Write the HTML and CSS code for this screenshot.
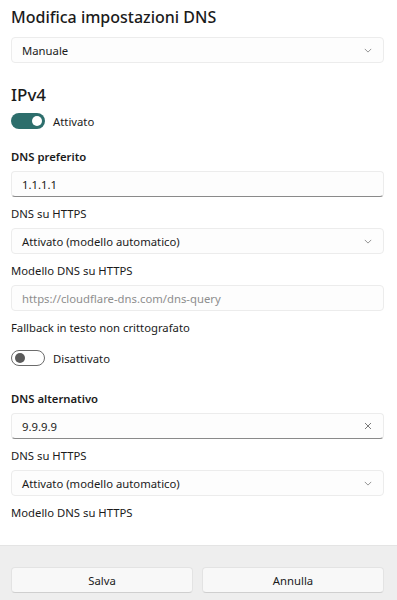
FILE: index.html
```html
<!DOCTYPE html>
<html lang="it">
<head>
  <meta charset="UTF-8" />
  <meta name="viewport" content="width=device-width, initial-scale=1.0"/>
  <title>Modifica impostazioni DNS</title>
  <link rel="stylesheet" href="styles.css">
</head>
<body>
  <div class="dialog">
    <div class="content">
      <h1>Modifica impostazioni DNS</h1>
      <div class="select">
        <span>Manuale</span>
        <svg class="chevron" viewBox="0 0 10 6"><path d="M1 1l4 4 4-4" /></svg>
      </div>

      <h2>IPv4</h2>
      <div class="toggle-row">
        <span class="toggle on"><span class="knob"></span></span>
        <span>Attivato</span>
      </div>

      <div class="label bold">DNS preferito</div>
      <div class="input"><span>1.1.1.1</span></div>

      <div class="label">DNS su HTTPS</div>
      <div class="select">
        <span>Attivato (modello automatico)</span>
        <svg class="chevron" viewBox="0 0 10 6"><path d="M1 1l4 4 4-4" /></svg>
      </div>

      <div class="label">Modello DNS su HTTPS</div>
      <div class="input plain"><span class="placeholder">https://cloudflare-dns.com/dns-query</span></div>

      <div class="label">Fallback in testo non crittografato</div>
      <div class="toggle-row loose">
        <span class="toggle off"><span class="knob"></span></span>
        <span>Disattivato</span>
      </div>

      <div class="label bold spaced">DNS alternativo</div>
      <div class="input">
        <span>9.9.9.9</span>
        <svg class="clear" viewBox="0 0 8 8"><path d="M1 1l6 6M7 1L1 7" /></svg>
      </div>

      <div class="label">DNS su HTTPS</div>
      <div class="select">
        <span>Attivato (modello automatico)</span>
        <svg class="chevron" viewBox="0 0 10 6"><path d="M1 1l4 4 4-4" /></svg>
      </div>

      <div class="label">Modello DNS su HTTPS</div>
    </div>

    <div class="footer">
      <button type="button">Salva</button>
      <button type="button">Annulla</button>
    </div>
  </div>
</body>
</html>
```

FILE: styles.css
```css
body {
  margin: 0;
  font-family: "Noto Sans", sans-serif;
  font-size: 11.3px;
  color: #1b1b1b;
  background: #fff;
}

.dialog {
  width: 397px;
  height: 600px;
  display: flex;
  flex-direction: column;
  overflow: hidden;
}

.content {
  flex: 1;
  padding: 5px 13px 0 11px;
  display: flex;
  flex-direction: column;
}

h1 {
  font-size: 16px;
  font-weight: 500;
  margin: 0 0 8px;
  line-height: 24px;
}

h2 {
  font-size: 17px;
  font-weight: 500;
  margin: 20px 0 4px;
  line-height: 24px;
}

.select,
.input {
  height: 26px;
  box-sizing: border-box;
  border: 1px solid #ececec;
  border-radius: 4px;
  background: #fdfdfd;
  display: flex;
  align-items: center;
  justify-content: space-between;
  padding: 0 11px 0 10px;
}

.input {
  border-bottom: 1px solid #8a8a8a;
}

.input.plain {
  border-bottom-color: #ececec;
}

.placeholder {
  color: #8e8e8e;
}

.chevron {
  width: 8px;
  height: 5px;
  fill: none;
  stroke: #7a7a7a;
  stroke-width: 1;
}

.clear {
  width: 8px;
  height: 8px;
  fill: none;
  stroke: #7a7a7a;
  stroke-width: 1;
}

.toggle-row {
  display: flex;
  align-items: center;
  gap: 8px;
  height: 20px;
}

.toggle-row.loose {
  margin-top: 6px;
}

.toggle {
  width: 34px;
  height: 16px;
  box-sizing: border-box;
  border-radius: 8px;
  display: flex;
  align-items: center;
  padding: 0 3px;
}

.toggle.on {
  background: #2d6e6c;
  justify-content: flex-end;
}

.toggle.off {
  border: 1px solid #6b6b6b;
}

.knob {
  width: 10px;
  height: 10px;
  border-radius: 50%;
}

.toggle.on .knob {
  background: #fff;
}

.toggle.off .knob {
  background: #5a5a5a;
}

.label {
  line-height: 16px;
  margin: 9px 0 6px;
}

.label.bold {
  font-weight: 600;
  margin-top: 18px;
}

.label.spaced {
  margin-top: 23px;
}

.footer {
  height: 55px;
  background: #eeeeee;
  border-top: 1px solid #e4e4e4;
  box-sizing: border-box;
  display: grid;
  grid-template-columns: 1fr 1fr;
  gap: 9px;
  padding: 21px 13px 0 11px;
}

.footer button {
  height: 26px;
  font-family: inherit;
  font-size: 11.3px;
  color: #1b1b1b;
  background: #f8f8f8;
  border: 1px solid #e3e3e3;
  border-bottom-color: #cfcfcf;
  border-radius: 4px;
}
```
